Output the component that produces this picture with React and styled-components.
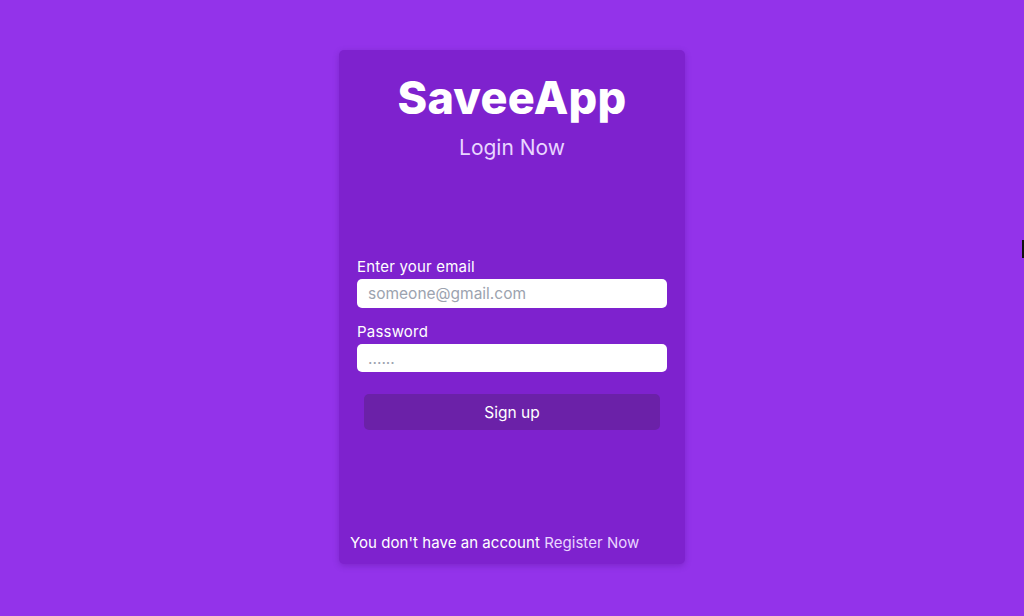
import React from "react";
import styled, { createGlobalStyle } from "styled-components";

const Global = createGlobalStyle`
  html, body { margin: 0; padding: 0; }
  body {
    background: #9333ea;
    font-family: "Inter", "Noto Sans", sans-serif;
    min-height: 616px;
  }
  * { box-sizing: border-box; }
`;

const Page = styled.div`
  min-height: 616px;
  display: flex;
  justify-content: center;
  align-items: flex-start;
  padding-top: 50px;
  position: relative;
`;

const Card = styled.div`
  width: 346px;
  height: 514px;
  background: #7e22ce;
  border-radius: 5px;
  box-shadow: 0 2px 6px rgba(60, 0, 110, 0.25);
  display: flex;
  flex-direction: column;
  padding: 20px 18px 11px 18px;
`;

const Title = styled.h1`
  margin: 0;
  text-align: center;
  color: #ffffff;
  font-size: 45px;
  font-weight: 800;
  line-height: 56px;
  letter-spacing: 0.3px;
`;

const Subtitle = styled.h2`
  margin: 7px 0 0;
  text-align: center;
  color: #e9d5ff;
  font-size: 21px;
  font-weight: 400;
  line-height: 30px;
`;

const Form = styled.form`
  margin-top: 94px;
  display: flex;
  flex-direction: column;
`;

const Label = styled.label`
  color: #ffffff;
  font-size: 15px;
  letter-spacing: 0.2px;
  line-height: 20px;
  margin-bottom: 2px;
  margin-top: ${(p) => (p.$first ? "0" : "14px")};
`;

const Input = styled.input`
  width: 310px;
  height: ${(p) => p.$h || 29}px;
  border: none;
  border-radius: 5px;
  background: #ffffff;
  padding: 0 11px;
  font-family: inherit;
  font-size: 15.5px;
  outline: none;
  &::placeholder { color: #9ca3af; }
`;

const Button = styled.button`
  margin: 22px auto 0;
  width: 296px;
  height: 36px;
  border: none;
  border-radius: 5px;
  background: #6b21a8;
  color: #ffffff;
  font-family: inherit;
  font-size: 15.5px;
  cursor: pointer;
`;

const Footer = styled.p`
  margin: auto 0 0 -7px;
  color: #ffffff;
  font-size: 15px;
  letter-spacing: 0.05px;
  line-height: 20px;
`;

const Link = styled.a`
  color: #e9d5ff;
  text-decoration: none;
`;

const EdgeMark = styled.div`
  position: absolute;
  right: 0;
  top: 240px;
  width: 2px;
  height: 18px;
  background: #111;
`;

export default function App() {
  return (
    <>
      <Global />
      <Page>
        <Card>
          <Title>SaveeApp</Title>
          <Subtitle>Login Now</Subtitle>
          <Form onSubmit={(e) => e.preventDefault()}>
            <Label $first>Enter your email</Label>
            <Input type="email" placeholder="someone@gmail.com" />
            <Label>Password</Label>
            <Input type="password" placeholder="......" $h={28} />
            <Button type="submit">Sign up</Button>
          </Form>
          <Footer>
            You don't have an account <Link href="#">Register Now</Link>
          </Footer>
        </Card>
        <EdgeMark />
      </Page>
    </>
  );
}
